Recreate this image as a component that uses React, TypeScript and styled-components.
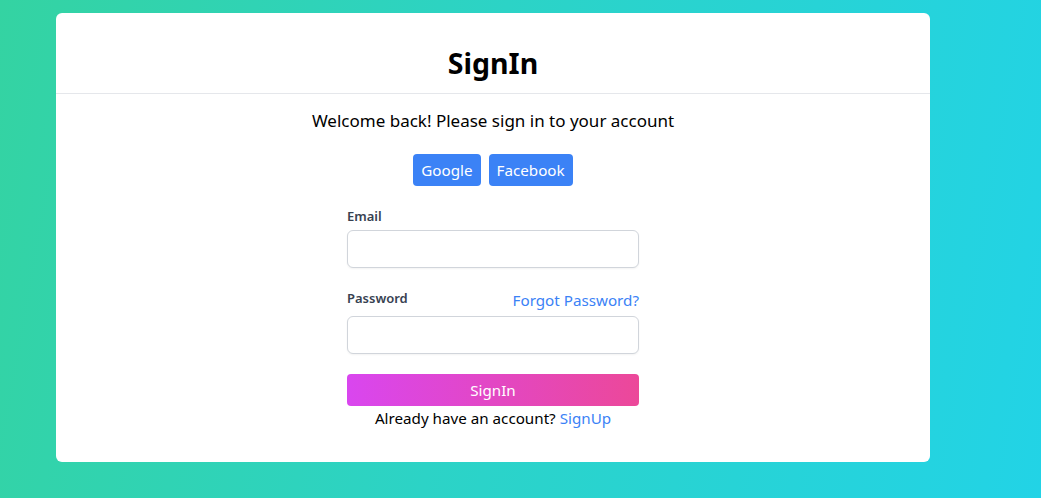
import styled, { createGlobalStyle } from 'styled-components';

const GlobalStyle = createGlobalStyle`
    * {
        box-sizing: border-box;
    }
    html, body {
        margin: 0;
        padding: 0;
    }
    body {
        font-family: 'Noto Sans', 'Open Sans', sans-serif;
        color: #111827;
    }
`;

function App() {
    return (
        <Page>
            <GlobalStyle />
            <Card>
                <Header>
                    <Title>SignIn</Title>
                </Header>
                <Body>
                    <Subtitle>Welcome back! Please sign in to your account</Subtitle>
                    <SocialRow>
                        <SocialButton>Google</SocialButton>
                        <SocialButton>Facebook</SocialButton>
                    </SocialRow>
                    <Form onSubmit={(e) => e.preventDefault()}>
                        <Field>
                            <LabelRow>
                                <Label htmlFor="email">Email</Label>
                            </LabelRow>
                            <Input id="email" type="email" />
                        </Field>
                        <Field>
                            <LabelRow>
                                <Label htmlFor="password">Password</Label>
                                <Link href="#">Forgot Password?</Link>
                            </LabelRow>
                            <Input id="password" type="password" />
                        </Field>
                        <SubmitButton type="submit">SignIn</SubmitButton>
                        <Footer>
                            Already have an account? <Link href="#">SignUp</Link>
                        </Footer>
                    </Form>
                </Body>
            </Card>
        </Page>
    );
}

export default App;

const Page = styled.div`
    min-height: 100vh;
    padding: 13px 0 36px 56px;
    background: linear-gradient(100deg, #34d3a2 0%, #2cd3c6 45%, #22d3e6 100%);
`;

const Card = styled.div`
    width: 874px;
    background: #fff;
    border-radius: 6px;
    padding-bottom: 32px;
`;

const Header = styled.div`
    padding: 33px 0 12px;
    border-bottom: 1px solid #e5e7eb;
    text-align: center;
`;

const Title = styled.h2`
    margin: 0;
    font-size: 28.5px;
    line-height: 35px;
    font-weight: 700;
    color: #000;
`;

const Body = styled.div`
    display: flex;
    flex-direction: column;
    align-items: center;
`;

const Subtitle = styled.p`
    margin: 13px 0 0;
    font-size: 17px;
    line-height: 28px;
    color: #000;
`;

const SocialRow = styled.div`
    display: flex;
    gap: 8px;
    margin-top: 19px;
`;

const SocialButton = styled.button`
    height: 32px;
    padding: 0 8px;
    border: none;
    border-radius: 4px;
    background: #3b82f6;
    color: #fff;
    font-family: inherit;
    font-size: 15.2px;
`;

const Form = styled.form`
    width: 292px;
    display: flex;
    flex-direction: column;
    margin-top: 20px;
`;

const Field = styled.div`
    display: flex;
    flex-direction: column;
    gap: 4px;
    margin-bottom: 20px;
`;

const LabelRow = styled.div`
    display: flex;
    justify-content: space-between;
    align-items: flex-start;
    min-height: 20px;
`;

const Label = styled.label`
    font-size: 13px;
    line-height: 20px;
    font-weight: 600;
    color: #374151;
`;

const Link = styled.a`
    color: #3b82f6;
    font-size: 15.2px;
    line-height: 24px;
    text-decoration: none;
`;

const Input = styled.input`
    height: 38px;
    width: 100%;
    border: 1px solid #d1d5db;
    border-radius: 6px;
    padding: 0 12px;
    font-family: inherit;
    font-size: 16px;
    box-shadow: 0 1px 2px rgba(0, 0, 0, 0.05);
`;

const SubmitButton = styled.button`
    height: 32px;
    border: none;
    border-radius: 4px;
    background: linear-gradient(to right, #d946ef, #ec4899);
    color: #fff;
    font-family: inherit;
    font-size: 15.2px;
`;

const Footer = styled.p`
    margin: 0;
    text-align: center;
    font-size: 15.2px;
    line-height: 24px;
    color: #000;
`;
